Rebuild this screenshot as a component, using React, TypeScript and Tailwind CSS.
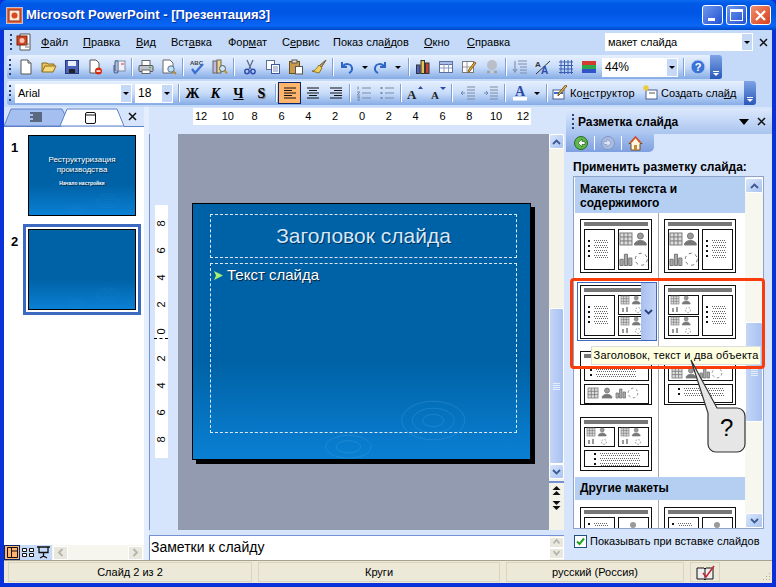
import type { ReactNode } from "react";

const menuItems: [string, string, string, number][] = [
  ["", "Ф", "айл", 42],
  ["", "П", "равка", 53],
  ["", "В", "ид", 35],
  ["Вст", "а", "вка", 57],
  ["Фор", "м", "ат", 54],
  ["С", "е", "рвис", 51],
  ["Показ сла", "й", "дов", 91],
  ["", "О", "кно", 43],
  ["", "С", "правка", 60],
];

const icons: Record<string, ReactNode> = {
  new: <><path d="M3 1h7l3 3v11H3z" fill="#fff" stroke="#555" /><path d="M10 1v3h3" fill="#ddd" stroke="#555" /></>,
  open: <><path d="M1 13V4h5l1 1h6v2" fill="#e8c25a" stroke="#8a6a1c" /><path d="M1 13l3-6h11l-3 6z" fill="#f7d97e" stroke="#8a6a1c" /></>,
  save: <><rect x="1.5" y="1.5" width="13" height="13" fill="#4a62b8" stroke="#26387e" /><rect x="4" y="2" width="8" height="5" fill="#e8eefc" /><rect x="5" y="10" width="6" height="4" fill="#222" /></>,
  perm: <><path d="M3 1h6l3 3v10H3z" fill="#fff" stroke="#555" /><circle cx="11.5" cy="12" r="3.5" fill="#d92a10" /><rect x="9.5" y="11.3" width="4" height="1.5" fill="#fff" /></>,
  mail: <><rect x="6" y="2" width="9" height="10" fill="#eef1f8" stroke="#7f8aa6" /><path d="M11 5h3" stroke="#d33" /><path d="M4 6v6a2 2 0 0 0 4 0V3a1.5 1.5 0 0 0-3 0v9" fill="none" stroke="#59709c" strokeWidth="1.2" /></>,
  print: <><rect x="4" y="1.5" width="8" height="5" fill="#fff" stroke="#666" /><rect x="1" y="6.5" width="14" height="6" rx="1" fill="#bcc3cf" stroke="#555" /><rect x="4" y="11" width="8" height="3.5" fill="#fff" stroke="#666" /><rect x="11" y="8" width="2" height="1" fill="#2fb52f" /></>,
  preview: <><path d="M2 1h7l3 3v10H2z" fill="#fff" stroke="#666" /><circle cx="10" cy="10" r="3.2" fill="#bfe0f7" stroke="#5a6f8c" /><path d="M12.3 12.3L15 15" stroke="#b5882a" strokeWidth="1.8" /></>,
  spell: <><text x="1" y="6" fontSize="6" fontWeight="700" fill="#444" fontFamily="Liberation Sans">ABC</text><path d="M3 10l3 4 8-9" fill="none" stroke="#3b6fd1" strokeWidth="2.2" /></>,
  research: <><rect x="1" y="2" width="4" height="12" fill="#c2b8e0" stroke="#666" /><rect x="5" y="1" width="4" height="13" fill="#ecd687" stroke="#666" /><circle cx="10.5" cy="9.5" r="3" fill="#cfe6f8" stroke="#555" /><path d="M12.5 11.5L15 14.5" stroke="#c28a1e" strokeWidth="1.8" /></>,
  cut: <><path d="M5 1l4 9M11 1L7 10" stroke="#5a6684" strokeWidth="1.2" /><circle cx="5" cy="12.5" r="2.2" fill="none" stroke="#2f4db0" strokeWidth="1.5" /><circle cx="11" cy="12.5" r="2.2" fill="none" stroke="#2f4db0" strokeWidth="1.5" /></>,
  copy: <><rect x="1.5" y="1.5" width="8" height="9" fill="#fff" stroke="#5f6f95" /><rect x="6.5" y="5.5" width="8" height="9" fill="#fff" stroke="#3f55a5" /><path d="M8 8h5M8 10h5M8 12h5" stroke="#7b8dc0" /></>,
  paste: <><rect x="1.5" y="2.5" width="10" height="12" fill="#c99a4e" stroke="#6e5120" /><rect x="4" y="1" width="5" height="3" fill="#e7e0c8" stroke="#555" /><rect x="7.5" y="7.5" width="7" height="7.5" fill="#fff" stroke="#555" /></>,
  brush: <><path d="M15 1L8 7l2 2z" fill="#c5a46a" stroke="#6d5325" /><path d="M8 6l3 3-3 5-7-2c3 0 4-2 7-6z" fill="#f2d25c" stroke="#8a7125" /></>,
  undo: <path d="M3 3v5h5M3.5 8C6 4 12 4 13 9c.3 2-1 4-3 5" fill="none" stroke="#2d66c9" strokeWidth="2" />,
  redo: <path d="M13 3v5H8M12.5 8C10 4 4 4 3 9c-.3 2 1 4 3 5" fill="none" stroke="#2d66c9" strokeWidth="2" />,
  chart: <><rect x="1.5" y="6" width="3.5" height="8.5" fill="#4a62c8" stroke="#333" /><rect x="6" y="1.5" width="3.5" height="13" fill="#eac14c" stroke="#333" /><rect x="10.5" y="4" width="3.5" height="10.5" fill="#c8413a" stroke="#333" /></>,
  table: <><rect x="1.5" y="2.5" width="13" height="11" fill="#fff" stroke="#5d6f9c" /><rect x="1.5" y="2.5" width="13" height="3" fill="#a8bde4" stroke="#5d6f9c" /><path d="M6 5v8M10.500 5v8M2 9h12" stroke="#8a9ac0" /></>,
  draw: <><rect x="1.5" y="2.500" width="11" height="11" fill="#fff" stroke="#7a7a7a" /><path d="M6 3v10M2 8h10" stroke="#9a9a9a" /><path d="M15 4l-6 8-2 2 .5-3 6-8z" fill="#e8b33c" stroke="#8a5a1c" /></>,
  link: <><circle cx="8" cy="6" r="5" fill="#b9bec8" /><path d="M3 13h4M9 13h4" stroke="#9ca2ae" strokeWidth="2.500" /><rect x="6" y="12" width="4" height="2" fill="#c8ccd4" /></>,
  lines: <><path d="M3 2v11M1 10l2 3 2-3" fill="none" stroke="#8b98b5" strokeWidth="1.300" /><path d="M6 2h9M6 5h9M8 8h7M8 11h7M8 14h7" stroke="#7f8ca8" /></>,
  aa: <><text x="0" y="8" fontSize="8" fontWeight="700" fill="#333" fontFamily="Liberation Sans">A</text><path d="M1 15L15 2" stroke="#333" /><text x="6" y="15" fontSize="10" fontWeight="700" fill="#2c4aa8" fontFamily="Liberation Sans">A</text></>,
  grid: <path d="M1 3h14M1 6.500h14M1 10h14M1 13.500h14M3 1v14M6.500 1v14M10 1v14M13.500 1v14" stroke="#3a5fb4" />,
  color: <><rect x="1" y="2" width="14" height="4" fill="#d23b2d" /><rect x="1" y="6" width="14" height="4" fill="#2fa84a" /><rect x="1" y="10" width="14" height="4" fill="#2f55c8" /></>,
  help: <><circle cx="8" cy="8" r="7" fill="#3a74d8" stroke="#b8d0f5" /><text x="8" y="12" fontSize="11" fontWeight="700" fill="#fff" textAnchor="middle" fontFamily="Liberation Sans">?</text></>,
  left: <path d="M2 3h12M2 5.500h8M2 8h12M2 10.500h8M2 13h12" stroke="#111" />,
  center: <path d="M2 3h12M4 5.500h8M2 8h12M4 10.500h8M2 13h12" stroke="#111" />,
  right: <path d="M2 3h12M6 5.500h8M2 8h12M6 10.500h8M2 13h12" stroke="#111" />,
  numbered: <><path d="M6 3h9M6 8h9M6 13h9" stroke="#7d8aa5" /><path d="M2 1.500v3M1 7h3l-3 3h3M1 12h3l-2 1 2 2H1" fill="none" stroke="#7d8aa5" /></>,
  bullets: <><path d="M6 3h9M6 8h9M6 13h9" stroke="#7d8aa5" /><rect x="1.500" y="2" width="2" height="2" fill="#7d8aa5" /><rect x="1.500" y="7" width="2" height="2" fill="#7d8aa5" /><rect x="1.500" y="12" width="2" height="2" fill="#7d8aa5" /></>,
  grow: <><text x="0" y="14" fontSize="13" fontWeight="700" fill="#222" fontFamily="Liberation Serif">A</text><path d="M11 4l2.500-3L16 4z" fill="#2c4aa8" /></>,
  shrink: <><text x="1" y="14" fontSize="11" fontWeight="700" fill="#222" fontFamily="Liberation Serif">A</text><path d="M10 2h6l-3 3z" fill="#2c4aa8" /></>,
  decrease: <><path d="M7 2h8M7 5h8M7 8h8M7 11h8M7 14h8" stroke="#7d8aa5" /><path d="M5 8H1M3 6L1 8l2 2" fill="none" stroke="#6f88b8" /></>,
  increase: <><path d="M7 2h8M7 5h8M7 8h8M7 11h8M7 14h8" stroke="#7d8aa5" /><path d="M1 8h4M3 6l2 2-2 2" fill="none" stroke="#6f88b8" /></>,
  fontcolor: <><text x="8" y="11" fontSize="14" fontWeight="700" fill="#2b4da8" textAnchor="middle" fontFamily="Liberation Serif">A</text><rect x="1" y="12" width="14" height="3.500" fill="#fff" /></>,
  design: <><rect x="1" y="5" width="11" height="9" fill="#fff" stroke="#4a5f95" /><path d="M2 8h9" stroke="#3a6fd0" strokeWidth="2" /><path d="M15 1l-7 8-2 2 .5-3 7-8z" fill="#e2b84a" stroke="#7a5a20" /></>,
  newslide: <><rect x="4" y="5" width="11" height="9" fill="#fff" stroke="#4a5f95" /><path d="M7 8h6" stroke="#555" /><path d="M4 0v6M1 3h6M2 1l4 4M6 1L2 5" stroke="#efc93a" strokeWidth="1.300" /></>,
};

function Icon({ name, size = 16 }: { name: string; size?: number }) {
  return (
    <svg width={size} height={size} viewBox="0 0 16 16" className="shrink-0">
      {icons[name]}
    </svg>
  );
}

function Btn({ name, w = 23 }: { name: string; w?: number }) {
  return (
    <div className="flex h-[22px] shrink-0 items-center justify-center" style={{ width: w }}>
      <Icon name={name} />
    </div>
  );
}

function Drop({ w = 11 }: { w?: number }) {
  return (
    <div className="flex h-[22px] shrink-0 items-center justify-center" style={{ width: w }}>
      <div className="h-0 w-0 border-x-[3px] border-t-[3px] border-x-transparent border-t-black" />
    </div>
  );
}

function Sep() {
  return <div className="ml-[2px] mr-[1px] h-[18px] w-[2px] shrink-0 border-l border-r border-l-[#7f9fd6] border-r-white" />;
}

function Grip() {
  return (
    <div className="ml-[2px] flex h-[16px] w-[3px] shrink-0 flex-col justify-between">
      {[0, 1, 2, 3].map((i) => (
        <div key={i} className="h-[2px] w-[2px] bg-[#27417c]" />
      ))}
    </div>
  );
}

function Chevron() {
  return (
    <div className="ml-auto flex h-full w-[12px] shrink-0 flex-col items-center justify-end rounded-r-[3px] bg-[linear-gradient(180deg,#7ea4e6,#2a58b8)] pb-[3px]">
      <div className="mb-[1px] h-[1px] w-[6px] bg-white" />
      <div className="h-0 w-0 border-x-[3px] border-t-[3px] border-x-transparent border-t-white" />
    </div>
  );
}

function Combo({ text, w, small }: { text: string; w: number; small?: boolean }) {
  return (
    <div className="mr-[3px] flex h-[19px] shrink-0 items-center bg-white pl-[3px]" style={{ width: w }}>
      <span className={small ? "text-[12px]" : "text-[11px]"}>{text}</span>
      <div className="ml-auto flex h-full w-[12px] items-center justify-center border border-white bg-[#c5d9f6]">
        <div className="h-0 w-0 border-x-[3px] border-t-[3px] border-x-transparent border-t-black" />
      </div>
    </div>
  );
}

function U({ a, k, b }: { a: string; k: string; b: string }) {
  return (
    <span className="whitespace-nowrap">
      {a}
      <span className="underline">{k}</span>
      {b}
    </span>
  );
}

function Doc() {
  return (
    <svg width="18" height="18" viewBox="0 0 18 18">
      <path d="M4 1h10v16H4z" fill="#fff" stroke="#555" />
      <rect x="1" y="3" width="10" height="9" fill="#d2421f" stroke="#7c2410" />
      <circle cx="6" cy="7.500" r="2.500" fill="#f2c8b4" />
      <path d="M9 14h4M9 11h4" stroke="#777" />
    </svg>
  );
}

function TitleBar() {
  return (
    <div className="flex h-[30px] shrink-0 items-center rounded-t-[7px] bg-[linear-gradient(180deg,#0a6cf0_0%,#0058e6_12%,#0056e4_45%,#0a66f5_85%,#0048c8_100%)] pl-[6px] pr-[5px]">
      <svg width="17" height="17" viewBox="0 0 17 17">
        <rect x="0.500" y="0.500" width="16" height="16" fill="#e9683a" stroke="#fff" strokeOpacity="0.600" />
        <rect x="3" y="3" width="11" height="11" fill="#fbe7d6" stroke="#8a2a10" />
        <circle cx="8.500" cy="8.500" r="3" fill="#d9481f" />
      </svg>
      <span className="ml-[3px] text-[13px] font-bold text-white [text-shadow:1px_1px_0_#0a2f9a]">
        Microsoft PowerPoint - [Презентация3]
      </span>
      <div className="ml-auto flex gap-[3px]">
        <div className="flex h-[20px] w-[21px] items-end rounded-[3px] border border-white bg-[linear-gradient(135deg,#6d97ee,#2252d0)] pb-[3px] pl-[5px]">
          <div className="h-[3px] w-[7px] bg-white" />
        </div>
        <div className="flex h-[20px] w-[21px] items-center justify-center rounded-[3px] border border-white bg-[linear-gradient(135deg,#6d97ee,#2252d0)]">
          <div className="h-[12px] w-[13px] border border-t-[3px] border-white" />
        </div>
        <div className="flex h-[20px] w-[21px] items-center justify-center rounded-[3px] border border-white bg-[linear-gradient(135deg,#ee8f6d,#d8401c)]">
          <svg width="13" height="13" viewBox="0 0 13 13">
            <path d="M2 2l9 9M11 2l-9 9" stroke="#fff" strokeWidth="2.200" />
          </svg>
        </div>
      </div>
    </div>
  );
}

function MenuBar() {
  return (
    <div className="flex h-[24px] shrink-0 items-center pl-[4px] text-[11px] text-black">
      <Grip />
      <div className="ml-[3px] w-[19px]">
        <Doc />
      </div>
      <div className="ml-[6px] flex">
        {menuItems.map(([a, k, b, w]) => (
          <div key={a + k + b} className="shrink-0 whitespace-nowrap" style={{ width: w }}>
            <U a={a} k={k} b={b} />
          </div>
        ))}
      </div>
      <div className="ml-[78px] flex h-[18px] w-[148px] shrink-0 items-center bg-white pl-[3px] text-[11px]">
        макет слайда
        <div className="ml-auto flex h-full w-[12px] items-center justify-center border border-white bg-[#c5d9f6]">
          <div className="h-0 w-0 border-x-[3px] border-t-[3px] border-x-transparent border-t-black" />
        </div>
      </div>
      <svg className="ml-[6px]" width="9" height="9" viewBox="0 0 9 9">
        <path d="M1 1l7 7M8 1L1 8" stroke="#111" strokeWidth="1.500" />
      </svg>
    </div>
  );
}

const barClass =
  "ml-[3px] flex h-[24px] shrink-0 items-center rounded-[3px] bg-[linear-gradient(180deg,#e6f0fe_0%,#c8dcf9_50%,#86ace6_100%)]";

function ToolbarOne() {
  return (
    <div className={barClass + " w-[715px]"}>
      <Grip />
      <div className="ml-[2px]" />
      {["new", "open", "save", "perm", "mail"].map((n) => <Btn key={n} name={n} />)}
      <Sep />
      {["print", "preview"].map((n) => <Btn key={n} name={n} />)}
      <Sep />
      {["spell", "research"].map((n) => <Btn key={n} name={n} />)}
      <Sep />
      <div className="ml-[2px]" />
      {["cut", "copy", "paste", "brush"].map((n) => <Btn key={n} name={n} />)}
      <Sep />
      <Btn name="undo" w={24} />
      <Drop />
      <Btn name="redo" w={20} />
      <Drop w={16} />
      <Sep />
      {["chart", "table", "draw", "link"].map((n) => <Btn key={n} name={n} />)}
      <Sep />
      {["lines", "aa", "grid", "color"].map((n) => <Btn key={n} name={n} />)}
      <div className="ml-[2px]">
        <Combo text="44%" w={76} small />
      </div>
      <Sep />
      <Btn name="help" />
      <Chevron />
    </div>
  );
}

function ToolbarTwo() {
  return (
    <div className={barClass + " w-[749px]"}>
      <Grip />
      <div className="ml-[3px]" />
      <Combo text="Arial" w={117} />
      <Combo text="18" w={38} small />
      <Sep />
      {["Ж", "К", "Ч", "S"].map((t, i) => (
        <div
          key={t}
          className={
            "flex h-[22px] w-[23px] shrink-0 items-center justify-center font-['Liberation_Serif'] text-[14px] font-bold " +
            (i === 1 ? "italic " : "") +
            (i === 2 ? "underline " : "") +
            (i === 3 ? "[text-shadow:1px_1px_1px_#777]" : "")
          }
        >
          {t}
        </div>
      ))}
      <Sep />
      <div className="flex h-[22px] w-[23px] shrink-0 items-center justify-center border border-[#0a246a] bg-[#ffb56c]">
        <Icon name="left" />
      </div>
      <Btn name="center" />
      <Btn name="right" />
      <Sep />
      <Btn name="numbered" />
      <Btn name="bullets" />
      <Sep />
      <Btn name="grow" />
      <Btn name="shrink" />
      <Sep />
      <div className="ml-[2px]" />
      <Btn name="decrease" />
      <Btn name="increase" />
      <Sep />
      <Btn name="fontcolor" w={26} />
      <Drop w={7} />
      <div className="ml-[4px]" />
      <Sep />
      <div className="ml-[3px] flex shrink-0 items-center gap-[2px] text-[11px] tracking-[0.2px]">
        <Icon name="design" />
        <U a="Ко" k="н" b="структор" />
      </div>
      <div className="ml-[7px] flex shrink-0 items-center gap-[3px] text-[11px]">
        <Icon name="newslide" />
        <U a="Создать сла" k="й" b="д" />
      </div>
      <Chevron />
    </div>
  );
}

function Rings({ w, h }: { w: number; h: number }) {
  return (
    <svg className="absolute bottom-0 left-0" width={w} height={h} viewBox="0 0 340 80">
      <g fill="none" stroke="#3fa0e6" strokeOpacity="0.400">
        <ellipse cx="252" cy="36" rx="36" ry="22" />
        <ellipse cx="252" cy="36" rx="24" ry="14" />
        <ellipse cx="252" cy="36" rx="12" ry="7" />
        <ellipse cx="155" cy="66" rx="26" ry="13" />
        <ellipse cx="155" cy="66" rx="14" ry="7" />
      </g>
    </svg>
  );
}

const slideBg = "bg-[linear-gradient(180deg,#0062a6_0%,#0062a6_62%,#0a80d4_100%)]";

function Thumb({ first }: { first?: boolean }) {
  return (
    <div className={"relative h-[81px] w-[108px] overflow-hidden border border-black " + slideBg}>
      <Rings w={106} h={26} />
      {first && (
        <div className="relative pt-[19px] text-center text-white [text-shadow:1px_1px_0_#002a4a]">
          <div className="text-[8px] leading-[10px]">Реструктуризация</div>
          <div className="text-[8px] leading-[10px]">производства</div>
          <div className="mt-[5px] text-[5px] font-bold leading-[7px]">Начало настройки</div>
        </div>
      )}
    </div>
  );
}

function LeftPane() {
  return (
    <div className="flex w-[140px] shrink-0 flex-col bg-white">
      <svg width="140" height="20" viewBox="0 0 140 20" className="shrink-0 bg-[#d6e5fb]">
        <path d="M0 19L7 2h51l4 8-4 9z" fill="#a5c0f0" stroke="#5d80c8" />
        <path d="M56 19l7-17h50l7 17z" fill="#fff" stroke="#5d80c8" />
        <path d="M0 19.500h56M120 19.500h20" stroke="#5d80c8" />
        <path d="M26 6h12M29 8h9M26 10h12M29 12h9M26 14h12" stroke="#111" />
        <rect x="81.500" y="5.500" width="10" height="11" rx="1.500" fill="none" stroke="#111" />
        <path d="M82 8h9" stroke="#111" />
        <path d="M125 6l7 7M132 6l-7 7" stroke="#111" strokeWidth="1.500" />
      </svg>
      <div className="flex pt-[3px]">
        <div className="w-[19px] pl-[7px] pt-[10px] text-[13px] font-bold leading-[16px]">1</div>
        <div className="border-[3px] border-transparent p-[2px]">
          <Thumb first />
        </div>
      </div>
      <div className="flex pt-[3px]">
        <div className="w-[19px] pl-[7px] pt-[10px] text-[13px] font-bold leading-[16px]">2</div>
        <div className="border-[3px] border-[#3c6ac0] p-[2px]">
          <Thumb />
        </div>
      </div>
      <div className="mt-auto flex h-[15px] items-stretch">
        <div className="flex w-[48px] items-center bg-[#c5dbf9]">
          <div className="flex h-[15px] w-[16px] items-center justify-center border border-[#0a246a] bg-[#ffb56c]">
            <svg width="11" height="11" viewBox="0 0 11 11">
              <path d="M0.500 0.500h10v10h-10zM4.500 1v9M5 4h5" fill="none" stroke="#111" />
            </svg>
          </div>
          <svg className="ml-[2px]" width="12" height="11" viewBox="0 0 12 11">
            <path d="M0.500 1.500h4v3h-4zM7.500 1.500h4v3h-4zM0.500 6.500h4v3h-4zM7.500 6.500h4v3h-4z" fill="#fff" stroke="#111" />
          </svg>
          <svg className="ml-[3px]" width="13" height="13" viewBox="0 0 13 13">
            <path d="M0 1h13M2 1.500v5h9v-5M6.500 7v4M3 12l3.500-2 3.500 2" fill="none" stroke="#111" strokeWidth="1.300" />
          </svg>
        </div>
        <div className="flex flex-1 items-center justify-between bg-[#f6f5ee] px-[1px]">
          <ScrollStub dir="left" />
          <ScrollStub dir="right" />
        </div>
      </div>
    </div>
  );
}

function ScrollStub({ dir }: { dir: "left" | "right" | "up" | "down" }) {
  const d = {
    left: "M5.500 1L2 4.500 5.500 8",
    right: "M1.500 1L5 4.500 1.500 8",
    up: "M0.500 5.500L3.500 2 6.500 5.500",
    down: "M0.500 2L3.500 5.500 6.500 2",
  }[dir];
  return (
    <div className="flex h-[14px] w-[15px] items-center justify-center border border-white bg-[#e8e8de]">
      <svg width="7" height="9" viewBox="0 0 7 9">
        <path d={d} fill="none" stroke="#b4b4aa" strokeWidth="1.800" />
      </svg>
    </div>
  );
}

function ScrollBtn({ up, h = 15 }: { up?: boolean; h?: number }) {
  return (
    <div
      className="flex shrink-0 items-center justify-center rounded-[2px] border border-white bg-[linear-gradient(135deg,#d8e6fb,#a9c3f0)]"
      style={{ height: h }}
    >
      <svg width="9" height="6" viewBox="0 0 9 6">
        <path d={up ? "M1 5l3.500-3.500L8 5" : "M1 1l3.500 3.500L8 1"} fill="none" stroke="#3d5a95" strokeWidth="1.800" />
      </svg>
    </div>
  );
}

function Thumbbar({ h }: { h: number }) {
  return (
    <div
      className="flex shrink-0 items-center justify-center rounded-[2px] border border-white bg-[linear-gradient(90deg,#c4d6f7,#a8c1f0)]"
      style={{ height: h }}
    >
      <div className="flex w-[7px] flex-col gap-[1px]">
        {[0, 1, 2, 3].map((i) => (
          <div key={i} className="h-[1px] bg-[#e6eefb]" />
        ))}
      </div>
    </div>
  );
}

function Center() {
  return (
    <div className="flex w-[415px] shrink-0 flex-col">
      <div className="h-[27px] shrink-0 bg-[#d6e5fb] pl-[44px] pt-[1px]">
        <div className="flex h-[17px] w-[338px] items-center justify-between bg-white px-[1px] text-[11px]">
          {[12, 10, 8, 6, 4, 2, 0, 2, 4, 6, 8, 10, 12].map((n, i) => (
            <span key={i} className="w-[14px] text-center">{n}</span>
          ))}
        </div>
      </div>
      <div className="flex h-[396px] shrink-0">
        <div className="w-[29px] shrink-0 border-l border-[#7391d4] bg-[#d6e5fb] pl-[5px] pt-[71px]">
          <div className="relative flex h-[253px] w-[13px] flex-col items-center justify-between bg-white py-[13px] text-[11px] leading-[11px]">
            {[8, 6, 4, 2, 0, 2, 4, 6, 8].map((n, i) => (
              <span key={i} className="-rotate-90">{n}</span>
            ))}
            <div className="absolute left-[-1px] top-[133px] w-[14px] border-t border-dashed border-black" />
          </div>
        </div>
        <div className="w-[371px] shrink-0 bg-[#939bb0] pl-[14px] pt-[69px]">
          <div className={"relative h-[257px] w-[339px] border border-black pl-[17px] pr-[13px] pt-[10px] shadow-[4px_4px_0_#000] " + slideBg}>
            <Rings w={337} h={70} />
            <div className="relative flex h-[44px] items-center justify-center border border-dashed border-[#dfe9f5] text-[21px] text-[#d2e9fb] [text-shadow:1px_1px_0_#00335c]">
              Заголовок слайда
            </div>
            <div className="relative mt-[5px] flex h-[170px] items-start border border-dashed border-[#dfe9f5] pl-[3px] pt-[1px] text-[15px] leading-[20px] text-white [text-shadow:1px_1px_0_#00243f]">
              <svg className="mr-[4px] mt-[6px]" width="9" height="9" viewBox="0 0 9 9">
                <path d="M0 0l9 4.500L0 9l2-4.500z" fill="#a8f070" />
              </svg>
              Текст слайда
            </div>
          </div>
        </div>
        <div className="flex w-[15px] shrink-0 flex-col bg-[#f4f3ea]">
          <ScrollBtn up />
          <div className="h-[159px] shrink-0" />
          <Thumbbar h={156} />
          <ScrollBtn />
          <div className="mt-[2px] border-t-2 border-[#7391d4] pt-[1px]">
            <svg width="15" height="28" viewBox="0 0 15 28">
              <path d="M3.500 6L7.500 2l4 4zM3.500 11L7.500 7l4 4zM3.500 17l4 4 4-4zM3.500 22l4 4 4-4z" fill="#111" />
            </svg>
          </div>
        </div>
      </div>
      <div className="h-[5px] shrink-0 bg-[#d6e5fb]" />
      <div className="flex h-[25px] shrink-0 border-t border-[#7391d4] bg-white">
        <div className="flex-1 border-l border-[#7391d4] pl-[1px] pt-[2px] text-[14px] leading-[18px]">Заметки к слайду</div>
        <div className="flex w-[15px] flex-col justify-between bg-[#f4f3ea] py-[1px]">
          <ScrollStub dir="up" />
          <ScrollStub dir="down" />
        </div>
      </div>
    </div>
  );
}

function Glyphs({ x, y, s = 1, gap = 14 }: { x: number; y: number; s?: number; gap?: number }) {
  return (
    <g transform={`translate(${x} ${y}) scale(${s})`} fill="#bbb" stroke="#777" strokeWidth="0.800">
      <rect x="0" y="0" width="10" height="10" fill="#ddd" />
      <path d="M0 3.300h10M0 6.600h10M3.300 0v10M6.600 0v10" fill="none" />
      <circle cx={gap + 5} cy="2.500" r="2.500" fill="#999" />
      <path d={`M${gap} 10c0-5 10-5 10 0z`} fill="#777" />
    </g>
  );
}

function ChartRing({ x, y, s = 1 }: { x: number; y: number; s?: number }) {
  return (
    <g transform={`translate(${x} ${y}) scale(${s})`} stroke="#777" strokeWidth="0.800">
      <path d="M0 10V5h2.500v5zM3.500 10V1H6v9zM7 10V4h2.500v6z" fill="#aaa" />
      <circle cx="17" cy="5" r="4.800" fill="none" strokeDasharray="2.500 2.500" />
    </g>
  );
}

function TextLines({ x, y, w, n }: { x: number; y: number; w: number; n: number }) {
  const rows = Array.from({ length: n }, (_, i) => i);
  return (
    <g>
      {rows.map((i) => (
        <g key={i}>
          <rect x={x} y={y + i * 5} width="2" height="2" fill="#111" />
          <path d={`M${x + 6} ${y + i * 5 + 0.5}h${w}`} stroke="#666" strokeDasharray="1 1" />
          <path d={`M${x + 7} ${y + i * 5 + 2.5}h${w - 1}`} stroke="#666" strokeDasharray="1 1" />
        </g>
      ))}
    </g>
  );
}

function Box({ x, y, w, h }: { x: number; y: number; w: number; h: number }) {
  return <rect x={x + 0.5} y={y + 0.5} width={w} height={h} fill="#fff" stroke="#111" />;
}

function Objects({ x, y }: { x: number; y: number }) {
  return (
    <g>
      <Box x={x} y={y} w={30} h={19} />
      <Glyphs x={x + 3} y={y + 1} s={0.8} gap={14} />
      <path d={`M${x + 4} ${y + 17}V${y + 13}h2v4zM${x + 8} ${y + 17}v-5h2v5z`} fill="#999" />
      <circle cx={x + 20} cy={y + 15} r="2.500" fill="none" stroke="#777" strokeWidth="0.800" strokeDasharray="1.500 1.500" />
    </g>
  );
}

function Tile({ kind }: { kind: string }) {
  return (
    <svg width="72" height="54" viewBox="0 0 72 54" className="shrink-0">
      <rect x="0.500" y="0.500" width="71" height="53" fill="#fff" stroke="#111" />
      <rect x="4" y="3" width="64" height="4" fill="#777" />
      {kind === "textRight4" && (
        <>
          <Box x={4} y={10} w={30} h={40} />
          <TextLines x={8} y={21} w={14} n={4} />
          <Box x={38} y={10} w={30} h={40} />
          <Glyphs x={40} y={14} s={1.2} gap={12} />
          <ChartRing x={40} y={34} s={1.25} />
        </>
      )}
      {kind === "right4Text" && (
        <>
          <Box x={4} y={10} w={30} h={40} />
          <Glyphs x={6} y={14} s={1.2} gap={12} />
          <ChartRing x={6} y={34} s={1.25} />
          <Box x={38} y={10} w={30} h={40} />
          <TextLines x={42} y={21} w={14} n={4} />
        </>
      )}
      {kind === "textTwo" && (
        <>
          <Box x={4} y={10} w={30} h={40} />
          <TextLines x={8} y={21} w={14} n={4} />
          <Objects x={38} y={10} />
          <Objects x={38} y={31} />
        </>
      )}
      {kind === "twoText" && (
        <>
          <Objects x={4} y={10} />
          <Objects x={4} y={31} />
          <Box x={38} y={10} w={30} h={40} />
          <TextLines x={42} y={21} w={14} n={4} />
        </>
      )}
      {kind === "textObj" && (
        <>
          <Box x={4} y={15} w={64} h={14} />
          <TextLines x={10} y={18} w={40} n={2} />
          <Box x={4} y={33} w={64} h={19} />
          <Glyphs x={8} y={37} />
          <ChartRing x={36} y={37} />
        </>
      )}
      {kind === "objText" && (
        <>
          <Box x={4} y={15} w={64} h={14} />
          <Glyphs x={8} y={17} />
          <ChartRing x={36} y={17} />
          <Box x={4} y={33} w={64} h={18} />
          <TextLines x={14} y={37} w={40} n={2} />
        </>
      )}
      {kind === "twoTopText" && (
        <>
          <Objects x={4} y={10} />
          <Objects x={38} y={10} />
          <Box x={4} y={33} w={64} h={16} />
          <TextLines x={14} y={36} w={40} n={3} />
        </>
      )}
      {kind === "twoCols" && (
        <>
          <Box x={4} y={10} w={30} h={40} />
          <Box x={38} y={10} w={30} h={40} />
          <TextLines x={8} y={16} w={14} n={1} />
          <circle cx="53" cy="18" r="3" fill="#999" />
        </>
      )}
    </svg>
  );
}

function TileRow({ a, b, pt }: { a: string; b: string; pt: number }) {
  return (
    <div className="flex">
      <div className="flex w-[84px] border-r border-[#a9a9a9] pl-[5px]" style={{ paddingTop: pt }}>
        <Tile kind={a} />
      </div>
      <div className="pl-[5px]" style={{ paddingTop: pt }}>
        <Tile kind={b} />
      </div>
    </div>
  );
}

function TaskPane() {
  return (
    <div className="ml-[2px] mt-[2px] flex h-[449px] w-[206px] shrink-0 flex-col bg-[#d6e5fb]">
      <div className="flex h-[25px] shrink-0 items-center bg-[linear-gradient(180deg,#dbe8fc,#a9c4ef)] pl-[4px] pr-[6px]">
        <Grip />
        <span className="ml-[3px] text-[12px] font-bold text-black">Разметка слайда</span>
        <div className="ml-auto h-0 w-0 border-x-[5px] border-t-[6px] border-x-transparent border-t-black" />
        <svg className="ml-[8px]" width="9" height="9" viewBox="0 0 9 9">
          <path d="M1 1l7 7M8 1L1 8" stroke="#111" strokeWidth="1.500" />
        </svg>
      </div>
      <div className="flex h-[18px] w-[88px] shrink-0 items-center rounded-br-[5px] bg-[linear-gradient(180deg,#a8c3f0,#7ea0df)] pl-[8px]">
        <svg width="14" height="14" viewBox="0 0 14 14">
          <circle cx="7" cy="7" r="6.500" fill="#5fb84a" stroke="#2a6a20" />
          <path d="M8 3L4 7l4 4V8.500h3v-3H8z" fill="#fff" stroke="#1d4a16" strokeWidth="0.600" />
        </svg>
        <div className="mx-[6px] h-[14px] w-[1px] bg-white" />
        <svg width="14" height="14" viewBox="0 0 14 14">
          <circle cx="7" cy="7" r="6.500" fill="#a9bce0" stroke="#8296c0" />
          <path d="M6 3l4 4-4 4V8.500H3v-3h3z" fill="#dbe4f5" stroke="#8296c0" strokeWidth="0.600" />
        </svg>
        <div className="mx-[6px] h-[14px] w-[1px] bg-white" />
        <svg width="15" height="15" viewBox="0 0 15 15">
          <path d="M7.500 1L1 7.500h2V14h9V7.500h2z" fill="#fff6e0" stroke="#7a4a1c" />
          <path d="M3 6.500L7.500 1 12 6.500" fill="none" stroke="#d8481e" strokeWidth="1.500" />
          <rect x="6" y="9" width="3" height="5" fill="#c88a3a" />
        </svg>
      </div>
      <div className="mt-[7px] pl-[7px] text-[12px] font-bold leading-[17px] text-black">Применить разметку слайда:</div>
      <div className="mx-[7px] flex h-[353px] w-[191px] shrink-0 overflow-hidden border border-[#8ea3c7] bg-white">
        <div className="relative w-[171px] shrink-0 pl-[1px]">
          <div className="h-[36px] bg-[#b5cff2] pl-[5px] pt-[5px] text-[12px] font-bold leading-[14px] text-black">
            Макеты текста и
            <br />
            содержимого
          </div>
          <TileRow a="textRight4" b="right4Text" pt={6} />
          <div className="relative">
            <TileRow a="textTwo" b="twoText" pt={12} />
            <div className="absolute left-[2px] top-[9px] flex h-[59px] w-[80px] justify-end border border-[#3c6ac0]">
              <div className="flex h-full w-[15px] items-center justify-center bg-[linear-gradient(90deg,#a8bff0,#c5d5f7)]">
                <svg width="9" height="6" viewBox="0 0 9 6">
                  <path d="M1 1l3.500 3.500L8 1" fill="none" stroke="#27417c" strokeWidth="1.800" />
                </svg>
              </div>
            </div>
          </div>
          <TileRow a="textObj" b="objText" pt={12} />
          <div className="flex h-[72px]">
            <div className="w-[84px] border-r border-[#a9a9a9] pl-[5px] pt-[12px]">
              <Tile kind="twoTopText" />
            </div>
          </div>
          <div className="h-[23px] bg-[#b5cff2] pl-[5px] pt-[3px] text-[12px] font-bold leading-[17px] text-black">Другие макеты</div>
          <TileRow a="twoCols" b="twoCols" pt={7} />
        </div>
        <div className="flex w-[18px] shrink-0 flex-col bg-[#f7f6ef] pt-[1px]">
          <ScrollBtn up />
          <div className="h-[129px] shrink-0" />
          <Thumbbar h={100} />
          <div className="flex-1" />
          <ScrollBtn />
        </div>
      </div>
      <div className="flex items-center pl-[8px] pt-[4px] text-[11px]">
        <div className="flex h-[13px] w-[13px] items-center justify-center border border-[#1c5180] bg-white">
          <svg width="9" height="9" viewBox="0 0 9 9">
            <path d="M1 4.500l2.500 2.500L8 1.500" fill="none" stroke="#21a121" strokeWidth="2" />
          </svg>
        </div>
        <span className="ml-[3px] whitespace-nowrap">Показывать при вставке слайдов</span>
      </div>
    </div>
  );
}

function StatusBar() {
  return (
    <div className="flex h-[23px] shrink-0 items-center gap-[6px] border-t border-[#a5a28f] bg-[#ece9d8] pl-[4px] text-[11px] text-black">
      <div className="w-[244px] border border-[#d8d4c0] py-[2px] text-center leading-[14px]">Слайд 2 из 2</div>
      <div className="w-[242px] border border-[#d8d4c0] py-[2px] text-center leading-[14px]">Круги</div>
      <div className="w-[178px] border border-[#d8d4c0] py-[2px] text-center leading-[14px]">русский (Россия)</div>
      <div className="flex h-[20px] w-[30px] items-center justify-center border border-[#d8d4c0]">
        <svg width="19" height="15" viewBox="0 0 19 15">
          <path d="M1 3h7l1 1 1-1h7v11h-7l-1 1-1-1H1zM9 4v10" fill="#eee" stroke="#111" />
          <path d="M7 8l3 4 8-11" fill="none" stroke="#c8202a" strokeWidth="1.500" />
        </svg>
      </div>
      <svg className="ml-auto mr-[1px] self-end" width="12" height="12" viewBox="0 0 12 12">
        <path d="M10 2h1v1h-1zM7 5h1v1H7zM10 5h1v1h-1zM4 8h1v1H4zM7 8h1v1H7zM10 8h1v1h-1z" fill="#b0ad98" />
      </svg>
    </div>
  );
}

export default function App() {
  return (
    <div className="relative flex h-[587px] w-[776px] flex-col overflow-hidden bg-[#0831d9] font-['Liberation_Sans',sans-serif]">
      <TitleBar />
      <div className="mx-[4px] flex h-[553px] flex-col bg-[#c4daf8]">
        <MenuBar />
        <div className="h-[1px] shrink-0" />
        <ToolbarOne />
        <div className="h-[2px] shrink-0" />
        <ToolbarTwo />
        <div className="h-[2px] shrink-0" />
        <div className="flex h-[453px] shrink-0 bg-[#d6e5fb]">
          <LeftPane />
          <div className="w-[5px] shrink-0 bg-[#e4eefc]" />
          <Center />
          <TaskPane />
        </div>
        <StatusBar />
      </div>

      {/* annotation over the task pane */}
      <div className="absolute left-[570px] top-[278px] h-[91px] w-[195px] rounded-[4px] border-[3px] border-[#fa3c0a]" />
      <div className="absolute left-[591px] top-[346px] flex h-[19px] w-[170px] items-center justify-center whitespace-nowrap border border-[#ddd] bg-[#ffffe1] text-[11px] tracking-[0.2px] text-black">
        Заголовок, текст и два объекта
      </div>
      <svg className="absolute left-[686px] top-[355px]" width="66" height="100" viewBox="0 0 66 100">
        <path d="M5 5L31 53h20a8 8 0 0 1 8 8v28a8 8 0 0 1-8 8H30a8 8 0 0 1-8-8V58z" fill="#e6e6e6" stroke="#333" strokeWidth="1.200" />
      </svg>
      <div className="absolute left-[720px] top-[416px] text-[24px] leading-[24px] text-black">?</div>
    </div>
  );
}
